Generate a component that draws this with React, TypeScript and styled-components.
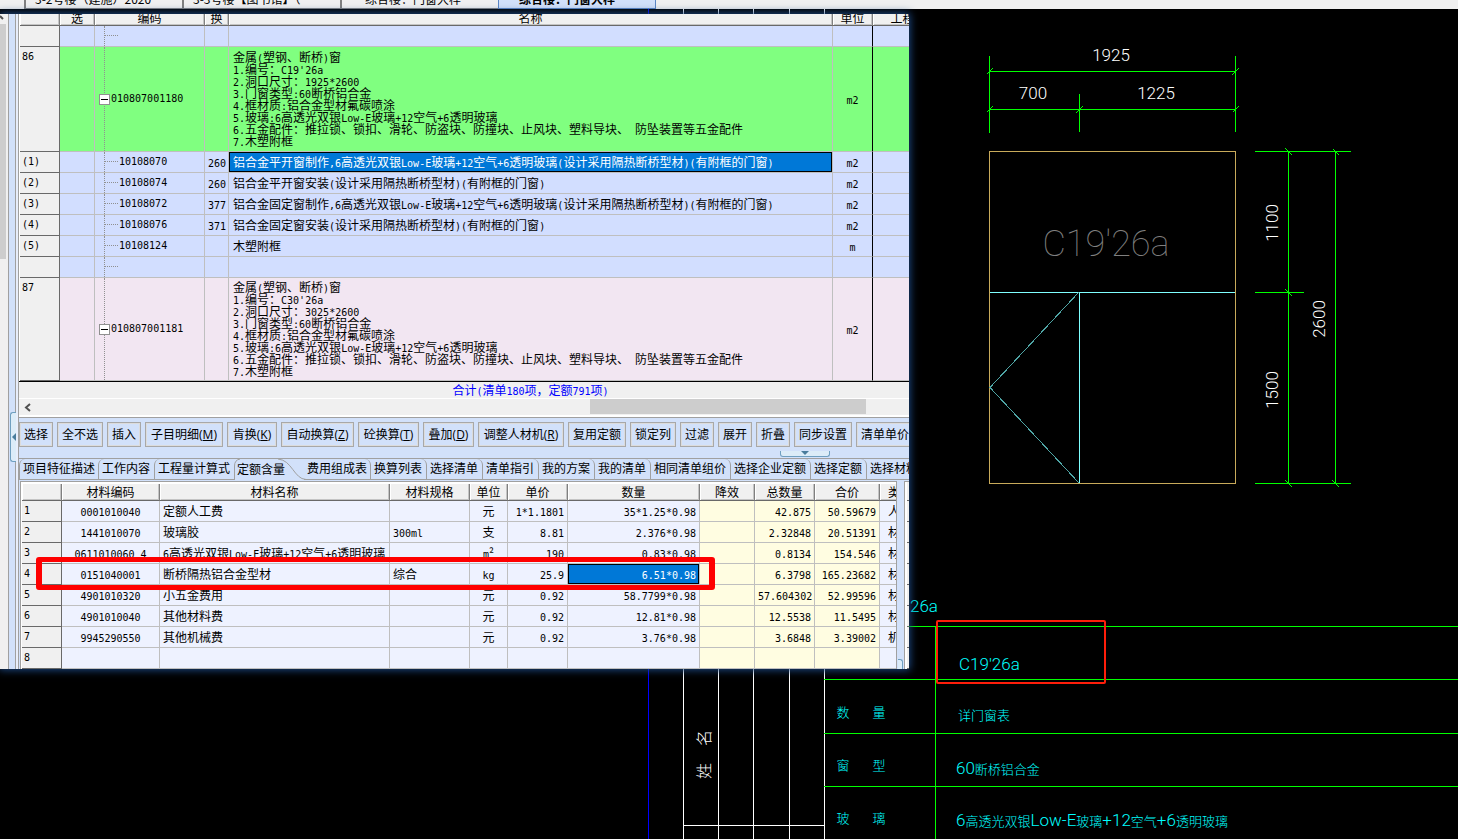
import React from "react";
import styled, { createGlobalStyle, css } from "styled-components";

const GlobalStyle = createGlobalStyle`
  * { box-sizing: border-box; }
  body { margin: 0; background: #000; }
  button { font: inherit; color: inherit; margin: 0; padding: 0; }
`;

const cjk = `"Noto Sans CJK SC", sans-serif`;
const ui = `"Open Sans", "Noto Sans CJK SC", sans-serif`;
const line = "#bfbfbf";
const dark = "#696969";
const panel = "#d2e1fa";
const face = "#f0f0f0";

/* ---------- text with half-width latin runs ---------- */

const Latin = styled.span`
  font-family: "DejaVu Sans Mono", monospace;
  font-size: 10px;
  line-height: 0;
`;

const Mixed = ({ children }: { children: string }) => (
  <>
    {(children.match(/[\x20-\x7e]+|[^\x20-\x7e]+/g) || []).map((run, i) =>
      /^[\x20-\x7e]/.test(run) ? <Latin key={i}>{run}</Latin> : <React.Fragment key={i}>{run}</React.Fragment>
    )}
  </>
);

/* ---------- page ---------- */

const Stage = styled.div`
  position: relative;
  min-height: 100vh;
  overflow: hidden;
  background: #000;
`;

const Drawing = styled.svg`
  position: absolute;
  inset: 0;
  width: 100%;
  height: 100%;
  font-family: Roboto, "Noto Sans CJK SC", sans-serif;
  font-weight: 300;
`;

const FileTabs = styled.nav`
  position: relative;
  display: flex;
  height: 9px;
  overflow: hidden;
  padding-left: 24px;
  background: ${face};
`;

const FileTab = styled.button<{ $active?: boolean; $indent: number }>`
  flex: 0 0 158px;
  height: 9px;
  border: 0;
  border-left: 2px solid #808080;
  border-bottom: 1px solid #808080;
  background: ${face};
  font: 12px/12px ${cjk};
  white-space: nowrap;
  display: flex;
  align-items: flex-end;
  padding: 0 0 3px ${(p) => p.$indent}px;
  ${(p) =>
    p.$active &&
    css`
      background: ${panel};
      border: 1px solid #5b86c4;
      border-top: 0;
      font-weight: 700;
    `}
`;

const AppWindow = styled.main`
  position: relative;
  display: flex;
  width: 100%;
  max-width: 909px;
  margin-top: 5px;
  overflow: hidden;
  background: ${panel};
  box-shadow: 0 0 8px 1px #1d4a86;
  color: #000;
  font: 12px/12px ${cjk};
`;

const SideScroll = styled.div`
  flex: 0 0 9px;
  background: ${face};
  border-right: 1px solid #a0a0a0;
`;

const SideUp = styled.button`
  display: block;
  width: 6px;
  height: 10px;
  border: 0;
  background: transparent;
  svg { display: block; }
`;

const SideThumb = styled.div`
  width: 6px;
  height: 235px;
  background: #cdcdcd;
`;

const Splitter = styled.div`
  flex: 0 0 10px;
  padding: 398px 0 0 1px;
  border-right: 1px solid #a0a0a0;
  box-shadow: inset -2px 0 0 #e8eefb, inset -3px 0 0 #a0a0a0;
`;

const SideHandle = styled.button`
  display: flex;
  align-items: center;
  justify-content: center;
  width: 6px;
  height: 50px;
  border: 1px solid #6f9fc0;
  border-right: 0;
  border-radius: 3px 0 0 3px;
  background: #dcecf8;
`;

const Content = styled.div`
  flex: 1 1 0;
  min-width: 0;
  display: flex;
  flex-direction: column;
`;

/* ---------- tables ---------- */

const GridBox = styled.div`
  overflow: hidden;
  padding-left: 1px;
  background: #fff;
`;

const Table = styled.table`
  table-layout: fixed;
  border-collapse: separate;
  border-spacing: 0;
`;

const Head = styled.th<{ $short?: boolean }>`
  height: ${(p) => (p.$short ? 12 : 17)}px;
  padding: 0;
  overflow: ${(p) => (p.$short ? "visible" : "hidden")};
  vertical-align: ${(p) => (p.$short ? "top" : "middle")};
  white-space: nowrap;
  font-weight: 400;
  line-height: ${(p) => (p.$short ? 8 : 14)}px;
  background: ${face};
  border-right: 1px solid #808080;
  border-bottom: 1px solid ${dark};
  box-shadow: inset 1px 0 0 #fff, inset -1px -1px 0 #c4c4c4;
`;

const tones = { blue: "#d2deff", green: "#80ff80", pink: "#f2e6f2", pale: "#eef2ff", cream: "#fffde1" };
type Tone = keyof typeof tones;

const Cell = styled.td<{ $tone: Tone; $align?: string; $selected?: boolean; $edge?: boolean; $tall?: number }>`
  height: ${(p) => p.$tall || 21}px;
  padding: 0 3px;
  overflow: hidden;
  white-space: pre;
  line-height: 12px;
  text-align: ${(p) => p.$align || "left"};
  background: ${(p) => tones[p.$tone]};
  border-right: 1px solid ${(p) => (p.$edge ? "#000" : line)};
  border-bottom: 1px solid ${line};
  ${(p) =>
    p.$selected &&
    css`
      background: #0078d7;
      color: #fff;
      box-shadow: inset 0 0 0 1px #000;
    `}
`;

const NameCell = styled(Cell)`
  padding-left: 4px;
`;

const RowHead = styled.th`
  padding: 2px 0 0 2px;
  vertical-align: top;
  text-align: left;
  font-weight: 400;
  line-height: 12px;
  background: ${face};
  border-right: 1px solid ${dark};
  border-bottom: 1px solid ${dark};
`;

const TreeCell = styled(Cell)<{ $leaf: boolean }>`
  position: relative;
  padding-left: ${(p) => (p.$leaf ? 24 : 4)}px;
  &::before {
    content: "";
    position: absolute;
    left: 9px;
    top: 0;
    bottom: 0;
    border-left: 1px dotted #909090;
  }
  &::after {
    content: "";
    position: absolute;
    left: 10px;
    top: 9px;
    width: ${(p) => (p.$leaf ? 13 : 0)}px;
    border-top: ${(p) => (p.$leaf ? 1 : 0)}px dotted #909090;
  }
`;

const TreeItem = styled.div`
  position: relative;
  z-index: 1;
  display: flex;
  align-items: center;
  gap: 1px;
  line-height: 12px;
`;

const Toggle = styled.button`
  display: flex;
  align-items: center;
  justify-content: center;
  width: 11px;
  height: 11px;
  border: 1px solid #909090;
  background: #fff;
  &::before {
    content: "";
    width: 7px;
    height: 1px;
    background: #000;
  }
`;

const Summary = styled.div`
  height: 18px;
  padding: 2px 0 0 133px;
  background: ${face};
  border-top: 1px solid #000;
  border-bottom: 1px solid #fff;
  color: #0000ff;
  text-align: center;
`;

const HScroll = styled.div`
  display: flex;
  height: 19px;
  background: ${face};
  border-bottom: 1px solid #a0a0a0;
  box-shadow: inset 0 -2px 0 #fff;
`;

const ScrollBtn = styled.button`
  width: 18px;
  height: 15px;
  border: 0;
  background: transparent;
`;

const HThumb = styled.div`
  width: 276px;
  height: 15px;
  margin-left: 553px;
  background: #cdcdcd;
`;

/* ---------- command bar and tabs ---------- */

const CommandBar = styled.div`
  display: flex;
  gap: 4px;
  padding: 4px 0;
  overflow: hidden;
`;

const Command = styled.button<{ $w: number }>`
  flex: 0 0 ${(p) => p.$w}px;
  height: 25px;
  border: 1px solid #a8a8a8;
  background: ${panel};
  box-shadow: inset -1px -1px 0 #dcdcdc, inset 1px 1px 0 #dcdcdc;
  font: 12px/16px ${ui};
  white-space: nowrap;
`;

const HandleRow = styled.div`
  display: flex;
  height: 7px;
  padding-left: 761px;
`;

const DownHandle = styled.button`
  display: flex;
  justify-content: center;
  width: 50px;
  height: 6px;
  border: 1px solid #6f9fc0;
  border-top: 0;
  border-radius: 0 0 3px 3px;
  background: #dcecf8;
`;

const TabBar = styled.div`
  display: flex;
  height: 22px;
  overflow: hidden;
  border-top: 1px solid #a0a0a0;
`;

const Tab = styled.button<{ $w: number; $side: "left" | "right" | "active" }>`
  position: relative;
  flex: 0 0 ${(p) => p.$w}px;
  padding: 0 0 0 3px;
  border: 0 solid #a0a0a0;
  border-bottom-width: ${(p) => (p.$side === "active" ? 0 : 1)}px;
  border-left-width: ${(p) => (p.$side === "left" ? 1 : 0)}px;
  border-right-width: ${(p) => (p.$side === "right" ? 1 : 0)}px;
  border-radius: ${(p) => (p.$side === "left" ? "6px 0 0 0" : p.$side === "right" ? "0 6px 0 0" : "0")};
  background: transparent;
  font: 12px/16px ${ui};
  text-align: left;
  white-space: nowrap;
`;

const ActiveShape = styled.svg`
  position: absolute;
  inset: 0;
  width: 72px;
  height: 21px;
`;

/* ---------- lower panel ---------- */

const Lower = styled.section`
  position: relative;
  display: flex;
  gap: 7px;
  padding: 1px 0 0 1px;
`;

const LowerGrid = styled.div`
  flex: 1 1 0;
  min-width: 0;
  overflow: hidden;
  padding: 2px 1px 0 1px;
  border-left: 1px solid #a0a0a0;
  border-top: 1px solid #a0a0a0;
  border-right: 1px solid #a0a0a0;
  background: #fff;
`;

const NextPanel = styled.div`
  flex: 0 0 5px;
  border-left: 1px solid #a0a0a0;
  border-top: 1px solid #a0a0a0;
  background: repeating-linear-gradient(${face} 0 18px, ${dark} 18px 19px, ${face} 19px 21px);
  box-shadow: inset 2px 0 0 #fff;
`;

const LowerHandle = styled.button`
  position: absolute;
  right: 6px;
  bottom: 0;
  width: 5px;
  height: 10px;
  border: 1px solid #6f9fc0;
  border-left: 0;
  border-bottom: 0;
  border-radius: 0 3px 0 0;
  background: #dcecf8;
`;

const RowMark = styled.div`
  position: absolute;
  left: 17px;
  top: 77px;
  width: 679px;
  height: 33px;
  border: 5px solid #ff0000;
  border-left-width: 6px;
  border-right-width: 6px;
  border-radius: 3px;
  pointer-events: none;
`;

/* ---------- data ---------- */

const detail = (code: string, size: string) =>
  [
    "金属(塑钢、断桥)窗",
    `1.编号：${code}`,
    `2.洞口尺寸：${size}`,
    "3.门窗类型:60断桥铝合金",
    "4.框材质:铝合金型材氟碳喷涂",
    "5.玻璃:6高透光双银Low-E玻璃+12空气+6透明玻璃",
    "6.五金配件：推拉锁、锁扣、滑轮、防盗块、防撞块、止风块、塑料导块、 防坠装置等五金配件",
    "7.木塑附框",
  ].join("\n");

type Item = { no: string; code: string; sub: string; name: string; unit: string; tone: Tone; tall?: number; selected?: boolean };

const items: Item[] = [
  { no: "", code: "", sub: "", name: "", unit: "", tone: "blue" },
  { no: "86", code: "010807001180", sub: "", name: detail("C19'26a", "1925*2600"), unit: "m2", tone: "green", tall: 105 },
  { no: "(1)", code: "10108070", sub: "260", name: "铝合金平开窗制作,6高透光双银Low-E玻璃+12空气+6透明玻璃(设计采用隔热断桥型材)(有附框的门窗)", unit: "m2", tone: "blue", selected: true },
  { no: "(2)", code: "10108074", sub: "260", name: "铝合金平开窗安装(设计采用隔热断桥型材)(有附框的门窗)", unit: "m2", tone: "blue" },
  { no: "(3)", code: "10108072", sub: "377", name: "铝合金固定窗制作,6高透光双银Low-E玻璃+12空气+6透明玻璃(设计采用隔热断桥型材)(有附框的门窗)", unit: "m2", tone: "blue" },
  { no: "(4)", code: "10108076", sub: "371", name: "铝合金固定窗安装(设计采用隔热断桥型材)(有附框的门窗)", unit: "m2", tone: "blue" },
  { no: "(5)", code: "10108124", sub: "", name: "木塑附框", unit: "m", tone: "blue" },
  { no: "", code: "", sub: "", name: "", unit: "", tone: "blue" },
  { no: "87", code: "010807001181", sub: "", name: detail("C30'26a", "3025*2600"), unit: "m2", tone: "pink", tall: 103 },
];

const topCols = [40, 35, 110, 24, 604, 40, 60];
const topHeads = ["", "选", "编码", "换", "名称", "单位", "工程"];

const commands: [string, number, string?][] = [
  ["选择", 34], ["全不选", 46], ["插入", 34], ["子目明细", 78, "M"], ["肯换", 50, "K"], ["自动换算", 73, "Z"],
  ["砼换算", 61, "T"], ["叠加", 51, "D"], ["调整人材机", 86, "R"], ["复用定额", 58], ["锁定列", 46], ["过滤", 34],
  ["展开", 34], ["折叠", 34], ["同步设置", 58], ["清单单价", 58],
];

const tabs: [string, number][] = [
  ["项目特征描述", 79], ["工作内容", 56], ["工程量计算式", 80], ["定额含量", 70], ["费用组成表", 67], ["换算列表", 56],
  ["选择清单", 56], ["清单指引", 56], ["我的方案", 56], ["我的清单", 56], ["相同清单组价", 80], ["选择企业定额", 80],
  ["选择定额", 56], ["选择材料", 56],
];

const lowCols = [40, 98, 230, 80, 38, 60, 132, 55, 60, 65, 41];
const lowHeads = ["", "材料编码", "材料名称", "材料规格", "单位", "单价", "数量", "降效", "总数量", "合价", "类别"];
const lowAlign = ["center", "left", "left", "center", "right", "right", "right", "right", "right", "center"];

const materials: string[][] = [
  ["0001010040", "定额人工费", "", "元", "1*1.1801", "35*1.25*0.98", "", "42.875", "50.59679", "人工"],
  ["1441010070", "玻璃胶", "300ml", "支", "8.81", "2.376*0.98", "", "2.32848", "20.51391", "材料"],
  ["0611010060 4", "6高透光双银Low-E玻璃+12空气+6透明玻璃", "", "m²", "190", "0.83*0.98", "", "0.8134", "154.546", "材料"],
  ["0151040001", "断桥隔热铝合金型材", "综合", "kg", "25.9", "6.51*0.98", "", "6.3798", "165.23682", "材料"],
  ["4901010320", "小五金费用", "", "元", "0.92", "58.7799*0.98", "", "57.604302", "52.99596", "材料"],
  ["4901010040", "其他材料费", "", "元", "0.92", "12.81*0.98", "", "12.5538", "11.5495", "材料"],
  ["9945290550", "其他机械费", "", "元", "0.92", "3.76*0.98", "", "3.6848", "3.39002", "机械"],
  ["", "", "", "", "", "", "", "", "", ""],
];

/* ---------- drawing behind the window ---------- */

const Label = ({ x, y, anchor = "start", children }: { x: number; y: number; anchor?: "start" | "middle" | "end"; children: string }) => (
  <text x={x} y={y} fill="#00ffff" textAnchor={anchor}>
    {(children.match(/[\x20-\x7e]+|[^\x20-\x7e]+/g) || []).map((run, i) => (
      <tspan key={i} fontSize={/^[\x20-\x7e]/.test(run) ? 17 : 13}>{run}</tspan>
    ))}
  </text>
);

const Plan = () => (
  <Drawing aria-label="C19'26a">
    <g shapeRendering="crispEdges" fill="none">
      <path d="M648.5 9V2000" stroke="#0000ff" />
      <path d="M683.5 9V2000M718.5 9V2000M753.5 9V2000M789.5 9V2000M824.5 9V2000M683 825.5H824" stroke="#fff" />
      <path d="M824 626.5H4000M824 679.5H4000M824 733.5H4000M824 786.5H4000M935.5 626V2000" stroke="#00ff00" />
      <path d="M989.5 56V133M1235.5 56V132M1079.5 94V132M989 71.5H1236M989 109.5H1236" stroke="#00ff00" />
      <path d="M1255 151.5H1351M1255 292.5H1304M1255 483.5H1351M1288.5 151V484M1335.5 151V484" stroke="#00ff00" />
      <path d="M987 74l6-6M1232 75l7-7M987 112l6-6M1076 113l7-7M1233 112l6-6M1285 148l7 7M1333 149l6 6M1285 289l7 7M1285 480l7 7M1332 480l7 7" stroke="#00ff00" />
      <rect x="989.5" y="151.5" width="246" height="332" stroke="#c8aa5a" />
      <path d="M990 292.5H1235M1079.5 293V483" stroke="#7fffff" />
      <path d="M1079 292L990 387.5L1079 483" stroke="#4fa5a5" />
    </g>
    <g fill="#fff" fontSize="17" textAnchor="middle">
      <text x="1111" y="61">1925</text>
      <text x="1033" y="99">700</text>
      <text x="1156" y="99">1225</text>
      <text transform="translate(1278 223) rotate(-90)">1100</text>
      <text transform="translate(1278 390) rotate(-90)">1500</text>
      <text transform="translate(1325 319) rotate(-90)">2600</text>
    </g>
    <text x="1106" y="256" fontSize="36" fontWeight="100" textAnchor="middle" fill="#808080">C19'26a</text>
    <Label x={938} y={612} anchor="end">C19'26a</Label>
    <Label x={959} y={670}>C19'26a</Label>
    <Label x={843} y={717} anchor="middle">数</Label>
    <Label x={879} y={717} anchor="middle">量</Label>
    <Label x={958} y={720}>详门窗表</Label>
    <Label x={843} y={770} anchor="middle">窗</Label>
    <Label x={879} y={770} anchor="middle">型</Label>
    <Label x={956} y={774}>60断桥铝合金</Label>
    <Label x={843} y={823} anchor="middle">玻</Label>
    <Label x={879} y={823} anchor="middle">璃</Label>
    <Label x={956} y={826}>6高透光双银Low-E玻璃+12空气+6透明玻璃</Label>
    <g fill="#fff" fontSize="16" textAnchor="middle">
      <text transform="translate(710 738) rotate(-90)">名</text>
      <text transform="translate(710 771) rotate(-90)">姓</text>
    </g>
    <rect x="937" y="621" width="168" height="62" rx="1" fill="none" stroke="#ff1e0a" strokeWidth="2" />
  </Drawing>
);

const Cols = ({ widths }: { widths: number[] }) => (
  <colgroup>
    {widths.map((w, i) => (
      <col key={i} width={w} />
    ))}
  </colgroup>
);

const WideTable = styled(Table)<{ $w: number }>`
  width: ${(p) => p.$w}px;
`;

const sum = (list: number[]) => list.reduce((a, b) => a + b, 0);

const ItemGrid = () => (
  <GridBox>
    <WideTable $w={sum(topCols)}>
      <Cols widths={topCols} />
      <thead>
        <tr>{topHeads.map((h, i) => <Head key={i} $short>{h}</Head>)}</tr>
      </thead>
      <tbody>
        {items.map((r, i) => (
          <tr key={i}>
            <RowHead><Mixed>{r.no}</Mixed></RowHead>
            <Cell $tone={r.tone} $tall={r.tall} />
            <TreeCell $tone={r.tone} $leaf={!r.tall}>
              <TreeItem>
                {r.tall && <Toggle aria-label="折叠" />}
                <Mixed>{r.code}</Mixed>
              </TreeItem>
            </TreeCell>
            <Cell $tone={r.tone} $align="right"><Mixed>{r.sub}</Mixed></Cell>
            <NameCell $tone={r.tone} $selected={r.selected}><Mixed>{r.name}</Mixed></NameCell>
            <Cell $tone={r.tone} $align="center" $edge><Mixed>{r.unit}</Mixed></Cell>
            <Cell $tone={r.tone} />
          </tr>
        ))}
      </tbody>
    </WideTable>
  </GridBox>
);

const MaterialGrid = () => (
  <WideTable $w={sum(lowCols)}>
    <Cols widths={lowCols} />
    <thead>
      <tr>{lowHeads.map((h, i) => <Head key={i}>{h}</Head>)}</tr>
    </thead>
    <tbody>
      {materials.map((row, r) => (
        <tr key={r}>
          <RowHead><Mixed>{String(r + 1)}</Mixed></RowHead>
          {row.map((v, c) => (
            <Cell key={c} $tone={c >= 6 && c <= 8 ? "cream" : "pale"} $align={lowAlign[c]} $selected={r === 3 && c === 5}>
              <Mixed>{v}</Mixed>
            </Cell>
          ))}
        </tr>
      ))}
    </tbody>
  </WideTable>
);

export default function App() {
  return (
    <>
      <GlobalStyle />
      <Stage>
        <Plan />
        <FileTabs>
          <FileTab $indent={9}>3-2号楼（建施）2020</FileTab>
          <FileTab $indent={9}>3-3号楼【图书馆】（</FileTab>
          <FileTab $indent={23}>综合楼：门窗大样</FileTab>
          <FileTab $indent={20} $active>综合楼：门窗大样</FileTab>
        </FileTabs>
        <AppWindow>
          <SideScroll>
            <SideUp aria-label="向上滚动">
              <svg width="6" height="10"><path d="M0 2L3 5" fill="none" stroke="#505050" strokeWidth="2" /></svg>
            </SideUp>
            <SideThumb />
          </SideScroll>
          <Splitter>
            <SideHandle aria-label="收起">
              <svg width="4" height="8"><path d="M4 0V8L0 4Z" fill="#4a7c9c" /></svg>
            </SideHandle>
          </Splitter>
          <Content>
            <ItemGrid />
            <Summary><Mixed>合计(清单180项，定额791项)</Mixed></Summary>
            <HScroll>
              <ScrollBtn aria-label="向左滚动">
                <svg width="8" height="9" viewBox="0 0 8 9"><path d="M6 1L2 4.5L6 8" fill="none" stroke="#505050" strokeWidth="2" /></svg>
              </ScrollBtn>
              <HThumb />
            </HScroll>
            <CommandBar>
              {commands.map(([label, w, key]) => (
                <Command key={label} $w={w}>{label}{key && <>(<u>{key}</u>)</>}</Command>
              ))}
            </CommandBar>
            <HandleRow>
              <DownHandle aria-label="展开面板">
                <svg width="8" height="4"><path d="M0 0H8L4 4Z" fill="#4a7c9c" /></svg>
              </DownHandle>
            </HandleRow>
            <TabBar role="tablist">
              {tabs.map(([label, w], i) => (
                <Tab key={label} role="tab" $w={w} $side={i < 3 ? "left" : i === 3 ? "active" : "right"}>
                  {i === 3 && (
                    <ActiveShape>
                      <path d="M0.500 21V7Q0.500 1 6 0M44 0C58 1 60 20 72 20.500" fill="none" stroke="#a0a0a0" />
                    </ActiveShape>
                  )}
                  {label}
                </Tab>
              ))}
            </TabBar>
            <Lower>
              <LowerGrid><MaterialGrid /></LowerGrid>
              <NextPanel />
              <LowerHandle aria-label="展开" />
              <RowMark />
            </Lower>
          </Content>
        </AppWindow>
      </Stage>
    </>
  );
}
